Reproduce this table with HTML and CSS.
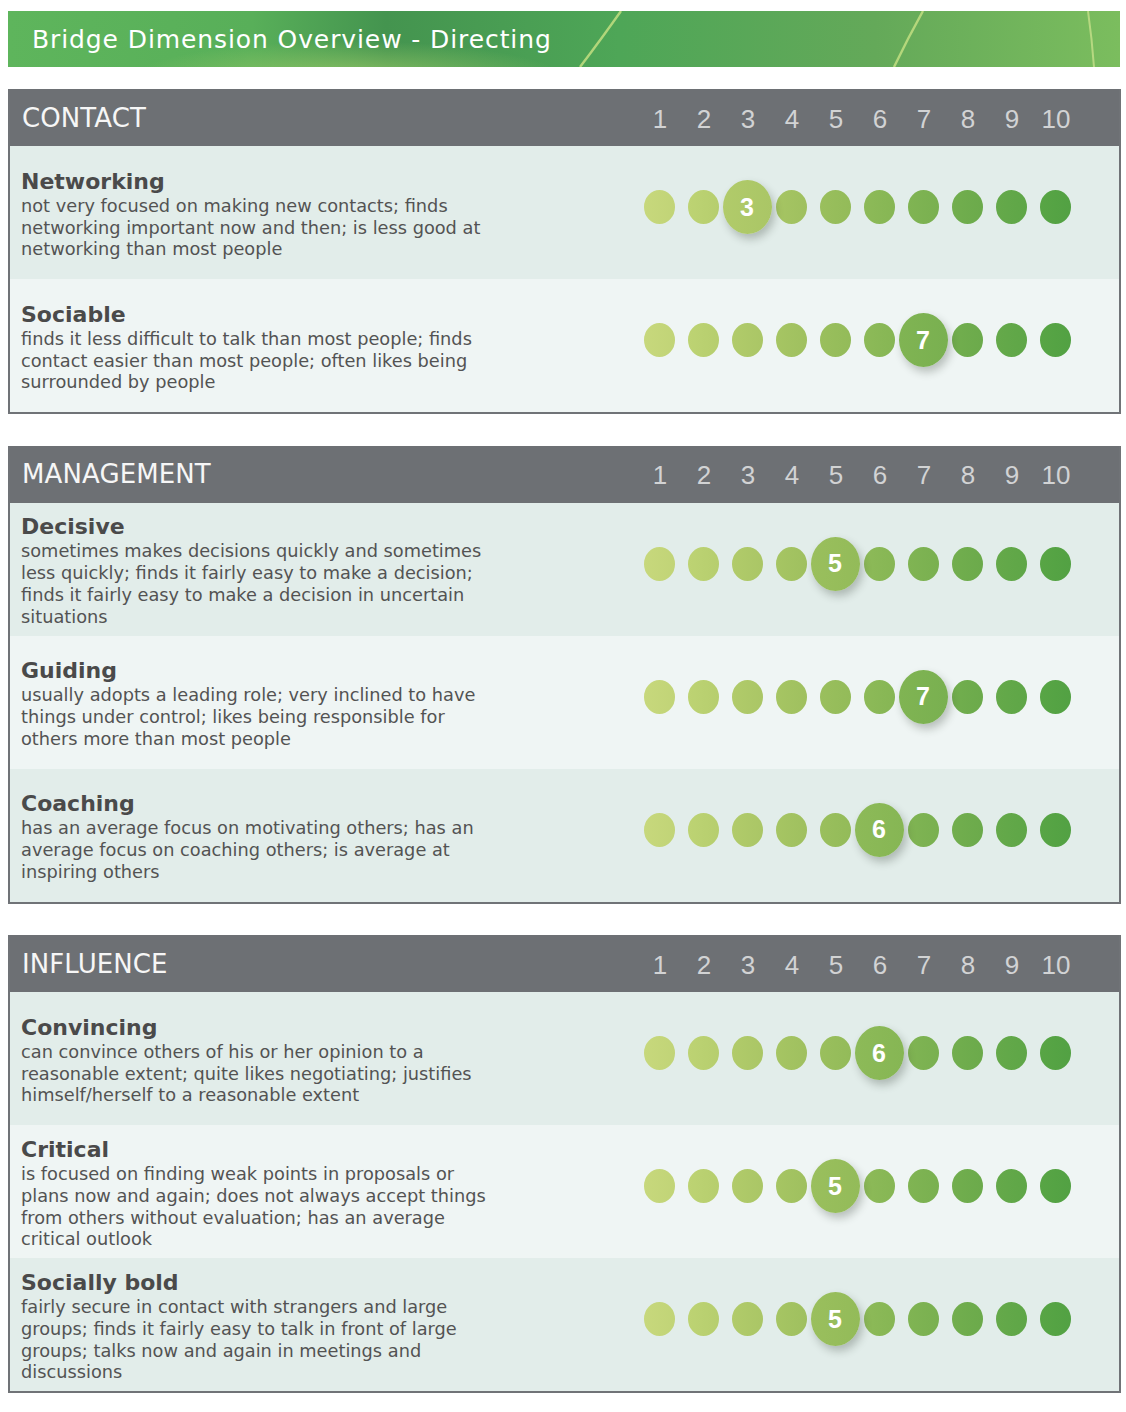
FILE: index.html
```html
<!DOCTYPE html>
<html lang="en">
<head>
<meta charset="utf-8">
<title>Bridge Dimension Overview - Directing</title>
<link rel="stylesheet" href="styles.css">
</head>
<body>
<div class="page">
  <header class="banner">
    <svg class="banner-bg" viewBox="0 0 1112 56" preserveAspectRatio="none" aria-hidden="true">
      <defs>
        <linearGradient id="bg" x1="0" y1="0" x2="1" y2="0">
          <stop offset="0" stop-color="#5eb55c"/>
          <stop offset="0.22" stop-color="#58af59"/>
          <stop offset="0.34" stop-color="#44944f"/>
          <stop offset="0.55" stop-color="#4ea657"/>
          <stop offset="0.78" stop-color="#64a959"/>
          <stop offset="1" stop-color="#7bbd5e"/>
        </linearGradient>
        <radialGradient id="glow" cx="0.5" cy="0.5" r="0.5">
          <stop offset="0" stop-color="#98c867" stop-opacity="0.9"/>
          <stop offset="1" stop-color="#98c867" stop-opacity="0"/>
        </radialGradient>
      </defs>
      <rect width="1112" height="56" fill="url(#bg)"/>
      <ellipse cx="340" cy="70" rx="220" ry="40" fill="url(#glow)"/>
      <path d="M613 0 Q594 27 572 56" fill="none" stroke="#bcdb7e" stroke-width="2.4" opacity="0.9"/>
      <path d="M915 0 Q900 27 886 56" fill="none" stroke="#bcdb7e" stroke-width="2.4" opacity="0.9"/>
      <path d="M1080 0 Q1084 28 1086 56" fill="none" stroke="#c6e08a" stroke-width="2" opacity="0.8"/>
    </svg>
    <h1>Bridge Dimension Overview - Directing</h1>
  </header>

  <section class="dim">
    <div class="dim-head">
      <h2>CONTACT</h2>
      <div class="nums"><span>1</span><span>2</span><span>3</span><span>4</span><span>5</span><span>6</span><span>7</span><span>8</span><span>9</span><span>10</span></div>
    </div>
    <div class="row">
      <div class="text">
        <h3>Networking</h3>
        <p>not very focused on making new contacts; finds networking important now and then; is less good at networking than most people</p>
      </div>
      <div class="scale">
        <span class="cell"><span class="dot c1"></span></span><span class="cell"><span class="dot c2"></span></span><span class="cell"><span class="dot c3 on">3</span></span><span class="cell"><span class="dot c4"></span></span><span class="cell"><span class="dot c5"></span></span><span class="cell"><span class="dot c6"></span></span><span class="cell"><span class="dot c7"></span></span><span class="cell"><span class="dot c8"></span></span><span class="cell"><span class="dot c9"></span></span><span class="cell"><span class="dot c10"></span></span>
      </div>
    </div>
    <div class="row">
      <div class="text">
        <h3>Sociable</h3>
        <p>finds it less difficult to talk than most people; finds contact easier than most people; often likes being surrounded by people</p>
      </div>
      <div class="scale">
        <span class="cell"><span class="dot c1"></span></span><span class="cell"><span class="dot c2"></span></span><span class="cell"><span class="dot c3"></span></span><span class="cell"><span class="dot c4"></span></span><span class="cell"><span class="dot c5"></span></span><span class="cell"><span class="dot c6"></span></span><span class="cell"><span class="dot c7 on">7</span></span><span class="cell"><span class="dot c8"></span></span><span class="cell"><span class="dot c9"></span></span><span class="cell"><span class="dot c10"></span></span>
      </div>
    </div>
  </section>

  <section class="dim">
    <div class="dim-head">
      <h2>MANAGEMENT</h2>
      <div class="nums"><span>1</span><span>2</span><span>3</span><span>4</span><span>5</span><span>6</span><span>7</span><span>8</span><span>9</span><span>10</span></div>
    </div>
    <div class="row">
      <div class="text">
        <h3>Decisive</h3>
        <p>sometimes makes decisions quickly and sometimes less quickly; finds it fairly easy to make a decision; finds it fairly easy to make a decision in uncertain situations</p>
      </div>
      <div class="scale">
        <span class="cell"><span class="dot c1"></span></span><span class="cell"><span class="dot c2"></span></span><span class="cell"><span class="dot c3"></span></span><span class="cell"><span class="dot c4"></span></span><span class="cell"><span class="dot c5 on">5</span></span><span class="cell"><span class="dot c6"></span></span><span class="cell"><span class="dot c7"></span></span><span class="cell"><span class="dot c8"></span></span><span class="cell"><span class="dot c9"></span></span><span class="cell"><span class="dot c10"></span></span>
      </div>
    </div>
    <div class="row">
      <div class="text">
        <h3>Guiding</h3>
        <p>usually adopts a leading role; very inclined to have things under control; likes being responsible for others more than most people</p>
      </div>
      <div class="scale">
        <span class="cell"><span class="dot c1"></span></span><span class="cell"><span class="dot c2"></span></span><span class="cell"><span class="dot c3"></span></span><span class="cell"><span class="dot c4"></span></span><span class="cell"><span class="dot c5"></span></span><span class="cell"><span class="dot c6"></span></span><span class="cell"><span class="dot c7 on">7</span></span><span class="cell"><span class="dot c8"></span></span><span class="cell"><span class="dot c9"></span></span><span class="cell"><span class="dot c10"></span></span>
      </div>
    </div>
    <div class="row">
      <div class="text">
        <h3>Coaching</h3>
        <p>has an average focus on motivating others; has an average focus on coaching others; is average at inspiring others</p>
      </div>
      <div class="scale">
        <span class="cell"><span class="dot c1"></span></span><span class="cell"><span class="dot c2"></span></span><span class="cell"><span class="dot c3"></span></span><span class="cell"><span class="dot c4"></span></span><span class="cell"><span class="dot c5"></span></span><span class="cell"><span class="dot c6 on">6</span></span><span class="cell"><span class="dot c7"></span></span><span class="cell"><span class="dot c8"></span></span><span class="cell"><span class="dot c9"></span></span><span class="cell"><span class="dot c10"></span></span>
      </div>
    </div>
  </section>

  <section class="dim">
    <div class="dim-head">
      <h2>INFLUENCE</h2>
      <div class="nums"><span>1</span><span>2</span><span>3</span><span>4</span><span>5</span><span>6</span><span>7</span><span>8</span><span>9</span><span>10</span></div>
    </div>
    <div class="row">
      <div class="text">
        <h3>Convincing</h3>
        <p>can convince others of his or her opinion to a reasonable extent; quite likes negotiating; justifies himself/herself to a reasonable extent</p>
      </div>
      <div class="scale">
        <span class="cell"><span class="dot c1"></span></span><span class="cell"><span class="dot c2"></span></span><span class="cell"><span class="dot c3"></span></span><span class="cell"><span class="dot c4"></span></span><span class="cell"><span class="dot c5"></span></span><span class="cell"><span class="dot c6 on">6</span></span><span class="cell"><span class="dot c7"></span></span><span class="cell"><span class="dot c8"></span></span><span class="cell"><span class="dot c9"></span></span><span class="cell"><span class="dot c10"></span></span>
      </div>
    </div>
    <div class="row">
      <div class="text">
        <h3>Critical</h3>
        <p>is focused on finding weak points in proposals or plans now and again; does not always accept things from others without evaluation; has an average critical outlook</p>
      </div>
      <div class="scale">
        <span class="cell"><span class="dot c1"></span></span><span class="cell"><span class="dot c2"></span></span><span class="cell"><span class="dot c3"></span></span><span class="cell"><span class="dot c4"></span></span><span class="cell"><span class="dot c5 on">5</span></span><span class="cell"><span class="dot c6"></span></span><span class="cell"><span class="dot c7"></span></span><span class="cell"><span class="dot c8"></span></span><span class="cell"><span class="dot c9"></span></span><span class="cell"><span class="dot c10"></span></span>
      </div>
    </div>
    <div class="row">
      <div class="text">
        <h3>Socially bold</h3>
        <p>fairly secure in contact with strangers and large groups; finds it fairly easy to talk in front of large groups; talks now and again in meetings and discussions</p>
      </div>
      <div class="scale">
        <span class="cell"><span class="dot c1"></span></span><span class="cell"><span class="dot c2"></span></span><span class="cell"><span class="dot c3"></span></span><span class="cell"><span class="dot c4"></span></span><span class="cell"><span class="dot c5 on">5</span></span><span class="cell"><span class="dot c6"></span></span><span class="cell"><span class="dot c7"></span></span><span class="cell"><span class="dot c8"></span></span><span class="cell"><span class="dot c9"></span></span><span class="cell"><span class="dot c10"></span></span>
      </div>
    </div>
  </section>
</div>
</body>
</html>
```

FILE: styles.css
```css
html, body {
  margin: 0;
  padding: 0;
  background: #ffffff;
}

body {
  font-family: "DejaVu Sans", Verdana, sans-serif;
  color: #4a4a4a;
}

.page {
  display: flex;
  flex-direction: column;
  padding: 11px 0 0 8px;
}

/* ---------- banner ---------- */
.banner {
  position: relative;
  width: 1112px;
  height: 56px;
  display: flex;
  align-items: center;
  overflow: hidden;
}

.banner-bg {
  position: absolute;
  left: 0;
  top: 0;
  width: 100%;
  height: 100%;
}

.banner h1 {
  position: relative;
  margin: 1px 0 0 24px;
  font-family: "DejaVu Sans", sans-serif;
  font-weight: 400;
  font-size: 25px;
  color: #ffffff;
  letter-spacing: 0.9px;
}

/* ---------- dimension blocks ---------- */
.dim {
  box-sizing: border-box;
  width: 1113px;
  margin-top: 22px;
  border: 2px solid #707377;
  border-top: 0;
  display: flex;
  flex-direction: column;
}

.dim + .dim {
  margin-top: 31.5px;
}

.dim-head {
  height: 57px;
  background: #6d7074;
  display: flex;
  align-items: center;
}

.dim-head h2 {
  margin: 0 0 0 12px;
  font-weight: 400;
  font-size: 26px;
  color: #f6f6f6;
  letter-spacing: 0.1px;
}

.nums {
  margin-left: auto;
  margin-right: 42px;
  margin-top: 3px;
  display: flex;
  font-family: "Liberation Sans", Arial, sans-serif;
  font-size: 26px;
  color: #d2d3d4;
}

.nums span {
  box-sizing: border-box;
  width: 44px;
  text-align: center;
  padding-left: 2px;
}

/* ---------- rows ---------- */
.row {
  height: 133px;
  display: flex;
  align-items: center;
  background: #e2edea;
}

.row:nth-child(odd) {
  background: #eff5f4;
}

.text {
  width: 471px;
  padding-left: 11px;
  margin-top: 3px;
}

.text h3 {
  margin: 0;
  font-size: 22px;
  line-height: 29px;
  font-weight: 700;
  color: #4a4a4a;
}

.text p {
  margin: 0;
  font-size: 17.75px;
  line-height: 21.8px;
  color: #535353;
}

.scale {
  align-self: flex-start;
  margin: 34px 42px 0 auto;
  display: flex;
  height: 54px;
}

.cell {
  width: 44px;
  display: flex;
  align-items: center;
  justify-content: center;
}

.dot {
  flex: none;
  width: 31px;
  height: 34px;
  border-radius: 50%;
}

.dot.on {
  position: relative;
  z-index: 1;
  width: 49px;
  height: 54px;
  display: flex;
  align-items: center;
  justify-content: center;
  font-family: "Liberation Sans", Arial, sans-serif;
  font-weight: 700;
  font-size: 25px;
  color: #ffffff;
  box-shadow: 3px 5px 8px rgba(40, 50, 40, 0.28);
}

.c1  { background: linear-gradient(90deg, #c7d87c, #c1d477); }
.c2  { background: linear-gradient(90deg, #bdd373, #b6ce6e); }
.c3  { background: linear-gradient(90deg, #b1cb6a, #aac666); }
.c4  { background: linear-gradient(90deg, #a6c563, #9fc05f); }
.c5  { background: linear-gradient(90deg, #9abf5d, #93bb59); }
.c6  { background: linear-gradient(90deg, #8dba58, #86b654); }
.c7  { background: linear-gradient(90deg, #80b453, #79b050); }
.c8  { background: linear-gradient(90deg, #72ae4e, #6baa4b); }
.c9  { background: linear-gradient(90deg, #65a94a, #5ea647); }
.c10 { background: linear-gradient(90deg, #58a545, #52a143); }
```
